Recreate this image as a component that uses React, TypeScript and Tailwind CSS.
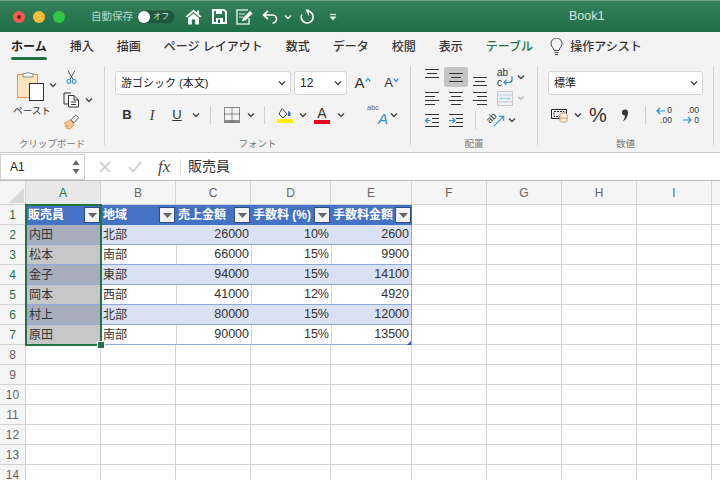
import type { ReactNode } from "react";

const jp = "font-['Liberation_Sans','Noto_Sans_CJK_JP',sans-serif]";

const tabs = ["ホーム", "挿入", "描画", "ページ レイアウト", "数式", "データ", "校閲", "表示"];

const columns = ["A", "B", "C", "D", "E", "F", "G", "H", "I", ""];

const rows = [
  ["内田", "北部", "26000", "10%", "2600"],
  ["松本", "南部", "66000", "15%", "9900"],
  ["金子", "東部", "94000", "15%", "14100"],
  ["岡本", "西部", "41000", "12%", "4920"],
  ["村上", "北部", "80000", "15%", "12000"],
  ["原田", "南部", "90000", "15%", "13500"],
];

const headers = ["販売員", "地域", "売上金額", "手数料 (%)", "手数料金額"];

function Chevron({ className = "", color = "#444" }: { className?: string; color?: string }) {
  return (
    <svg width="8" height="6" viewBox="0 0 8 6" className={`shrink-0 ${className}`}>
      <path d="M1 1.5 L4 4.5 L7 1.5" fill="none" stroke={color} strokeWidth="1.4" />
    </svg>
  );
}

function Slot({ w, children, className = "" }: { w: string; children: ReactNode; className?: string }) {
  return <div className={`flex items-center justify-center shrink-0 ${w} ${className}`}>{children}</div>;
}

type LineKind = "left" | "center" | "right" | "vert";

function Lines({ kind, top = 0 }: { kind: LineKind; top?: number }) {
  const d = {
    left: "M0 1.5H14M0 5.5H10M0 9.5H14M0 13.5H10",
    center: "M0 1.5H14M2 5.5H12M0 9.5H14M2 13.5H12",
    right: "M0 1.5H14M4 5.5H14M0 9.5H14M4 13.5H14",
    vert: "M0 3.5H14M2 7.5H12M0 11.5H14",
  }[kind];
  return (
    <svg width="14" height="15" viewBox="0 0 14 15" style={{ marginTop: top }}>
      <path d={d} stroke="#333" strokeWidth="1" fill="none" />
    </svg>
  );
}

function Group({ w, label, children }: { w: string; label: string; children: ReactNode }) {
  return (
    <div className={`${w} shrink-0 h-full flex flex-col`}>
      <div className="h-[76px]">{children}</div>
      <div className="text-center text-[9.5px] text-[#777] leading-[12px] mt-[2px]">{label}</div>
    </div>
  );
}

function Sep() {
  return <div className="w-px h-[79px] mt-[6px] bg-[#d2d2d2] shrink-0" />;
}

function SmallSep() {
  return <div className="w-px h-[18px] bg-[#d0d0d0] shrink-0" />;
}

function Select({ w, label, size = "text-[11px]" }: { w: string; label: string; size?: string }) {
  return (
    <div className={`${w} h-[24px] bg-white border border-[#d6d6d6] rounded-[3px] flex items-center justify-between pl-[5px] pr-[4px] shrink-0`}>
      <span className={`${size} text-[#222] whitespace-nowrap`}>{label}</span>
      <Chevron />
    </div>
  );
}

function TitleBar() {
  return (
    <div className="h-[32px] bg-gradient-to-b from-[#34805a] to-[#1f6f47] border-t border-[#6fa68a] flex items-center relative">
      <div className="w-[12px] h-[12px] rounded-full bg-[#f65c55] ml-[13px] flex items-center justify-center">
        <div className="w-[4px] h-[4px] rounded-full bg-[#7d1d18]" />
      </div>
      <div className="w-[12px] h-[12px] rounded-full bg-[#f9bb3c] ml-[8px]" />
      <div className="w-[12px] h-[12px] rounded-full bg-[#2fc640] ml-[8px]" />
      <span className="ml-[26px] text-[10.5px] text-[#b9d6c6] w-[46px] whitespace-nowrap">自動保存</span>
      <div className="w-[38px] h-[14px] rounded-full bg-[#1b5a3a] flex items-center border border-[#2a6b4a]">
        <div className="w-[12px] h-[12px] rounded-full bg-white" />
        <span className="text-[8px] text-[#cfe3d8] ml-[3px]">オフ</span>
      </div>
      <svg width="17" height="16" viewBox="0 0 17 16" className="ml-[10px]">
        <path d="M0.5 7.5 L8.5 0.5 L12 3.5 V1.5 H14 V5.3 L16.5 7.5 L15 8.5 L8.5 3 L2 8.5 Z" fill="#fff" />
        <path d="M3 9 L8.5 4.5 L14 9 V15.5 H10.2 V10.5 H6.8 V15.5 H3 Z" fill="#fff" />
      </svg>
      <svg width="15" height="15" viewBox="0 0 15 15" className="ml-[10px]">
        <path d="M1 1H12L14 3V14H1Z" fill="none" stroke="#fff" strokeWidth="2" />
        <path d="M4 1H10V5H4ZM4 9H11V14H4Z" fill="#fff" />
        <path d="M6 10.5H8V14H6Z" fill="#1f6f47" />
      </svg>
      <svg width="18" height="16" viewBox="0 0 18 16" className="ml-[9px]">
        <path d="M12 1H1V15H13V9" fill="none" stroke="#cfe3d8" strokeWidth="1.6" />
        <path d="M3 5H9M3 8H7" stroke="#cfe3d8" strokeWidth="1.2" />
        <path d="M6 12 L7 9 L14 2 L16.5 4.5 L9.5 11.5 Z" fill="#fff" />
      </svg>
      <svg width="16" height="14" viewBox="0 0 16 14" className="ml-[8px]">
        <path d="M6 1 L1.5 5 L6 9M2 5H10.5C13 5 14.5 7 14.5 9C14.5 11 13 13 10.5 13" fill="none" stroke="#fff" strokeWidth="1.7" />
      </svg>
      <Chevron className="ml-[6px]" color="#e4efe9" />
      <svg width="16" height="16" viewBox="0 0 16 16" className="ml-[7px]">
        <path d="M8.5 2 A6 6 0 1 1 2.7 5.5" fill="none" stroke="#fff" strokeWidth="1.7" />
        <path d="M6.5 0.5 L10 0.5 L10 7.5 Z" fill="#fff" />
      </svg>
      <svg width="8" height="8" viewBox="0 0 8 8" className="ml-[14px]">
        <path d="M1 1.5H7" stroke="#e4efe9" strokeWidth="1.2" />
        <path d="M0.5 3.5H7.5L4 7.5Z" fill="#e4efe9" />
      </svg>
      <span className="ml-[232px] text-[12.5px] text-[#d3e4da]">Book1</span>
    </div>
  );
}

function TabBar() {
  return (
    <div className="h-[28px] bg-[#f3f3f3] flex items-start pl-[11px] gap-[23px] text-[12px] text-[#333] pt-[6px]">
      {tabs.map((t, i) => (
        <div key={t} className="relative whitespace-nowrap leading-[18px]">
          <span className={i === 0 ? "font-bold text-[#222]" : "font-medium"}>{t}</span>
          {i === 0 && <div className="absolute left-0 right-0 top-[19px] h-[3px] rounded-full bg-[#217346]" />}
        </div>
      ))}
      <span className="text-[#217346] font-medium leading-[18px]">テーブル</span>
      <div className="flex items-center gap-[7px] -ml-[6px] leading-[18px]">
        <svg width="13" height="18" viewBox="0 0 13 18">
          <path d="M4 12.5C4 10 1 9 1 5.5A5.5 5.5 0 0 1 12 5.5C12 9 9 10 9 12.5ZM4.5 14.5H8.5M5 16.5H8" fill="none" stroke="#444" strokeWidth="1" />
        </svg>
        <span className="font-medium">操作アシスト</span>
      </div>
    </div>
  );
}

function Clipboard() {
  return (
    <div className="w-[104px] flex">
      <div className="ml-[14px] w-[38px] flex flex-col items-center pt-[10px]">
        <div className="flex items-start self-start ml-[1px]">
          <svg width="30" height="32" viewBox="0 0 30 32">
            <rect x="2.5" y="4.5" width="20" height="23" fill="#fbe3bd" stroke="#e9974a" strokeWidth="1" />
            <path d="M8 7V3.5H11A2.5 2.5 0 0 1 15 3.5H18V7Z" fill="#f5f5f5" stroke="#777" strokeWidth="0.8" />
            <rect x="14.5" y="13.5" width="14" height="17" fill="#fff" stroke="#333" strokeWidth="1" />
          </svg>
          <Chevron className="ml-[4px] mt-[12px]" />
        </div>
        <span className="text-[9.5px] text-[#333] whitespace-nowrap mt-[2px] -ml-[2px]">ペースト</span>
      </div>
      <div className="ml-[11px] flex flex-col pt-[10px]">
        <svg width="11" height="15" viewBox="0 0 12 17" className="ml-[3px]">
          <path d="M2 0.5 L8 11 M10 0.5 L4 11" stroke="#444" strokeWidth="1" />
          <circle cx="3" cy="13" r="2.2" fill="none" stroke="#2d8fd5" strokeWidth="1.2" />
          <circle cx="9" cy="13" r="2.2" fill="none" stroke="#2d8fd5" strokeWidth="1.2" />
        </svg>
        <div className="flex items-center mt-[6px]">
          <svg width="17" height="17" viewBox="0 0 17 17">
            <path d="M8 2H1V13H5" fill="none" stroke="#333" strokeWidth="1" />
            <path d="M5.5 4.5H11L15.5 9V16H5.5Z M11 4.5V9H15.5M8 11H13M8 13.5H13" fill="#fff" stroke="#333" strokeWidth="1" />
          </svg>
          <Chevron className="ml-[5px]" />
        </div>
        <svg width="17" height="16" viewBox="0 0 17 17" className="mt-[6px]">
          <path d="M1 10 L7 6 L11 11 L7 16 L3 15 L5 13 L1.5 13 L3.5 11.5 Z" fill="#fbc999" stroke="#ea8a3c" strokeWidth="1" />
          <path d="M8 6 L13 1 L16 4 L11 9.5 Z" fill="#f4f4f4" stroke="#555" strokeWidth="1" />
        </svg>
      </div>
    </div>
  );
}

function FontTools() {
  return (
    <div className="pt-[11px] pl-[10px]">
      <div className="flex items-center">
        <Select w="w-[176px]" label="游ゴシック (本文)" />
        <div className="w-[3px]" />
        <Select w="w-[53px]" label="12" size="text-[12px]" />
        <Slot w="w-[34px]" className="ml-[-1px]">
          <span className="text-[15px] text-[#333]">A</span>
          <Chevron className="mb-[6px] scale-y-[-1] scale-x-75 -ml-[1px]" color="#2d8fd5" />
        </Slot>
        <Slot w="w-[24px]">
          <span className="text-[13px] text-[#333]">A</span>
          <Chevron className="mb-[6px] scale-x-75 -ml-[1px]" color="#2d8fd5" />
        </Slot>
      </div>
      <div className="flex items-center mt-[7px] h-[26px] text-[#333]">
        <Slot w="w-[24px]"><span className="text-[13px] font-bold">B</span></Slot>
        <Slot w="w-[26px]"><span className="text-[14px] italic font-['Liberation_Serif',serif]">I</span></Slot>
        <Slot w="w-[24px]"><span className="text-[13px] underline">U</span></Slot>
        <Slot w="w-[14px]"><Chevron /></Slot>
        <Slot w="w-[14px]"><SmallSep /></Slot>
        <Slot w="w-[25px]" className="ml-[2px]">
          <svg width="16" height="16" viewBox="0 0 16 16">
            <path d="M0.5 0.5H15.5V13.5H0.5Z M8 0.5V13.5 M0.5 7H15.5" fill="none" stroke="#222" strokeWidth="1" strokeDasharray="1 1" />
            <path d="M0 15H16" stroke="#111" strokeWidth="1" />
          </svg>
        </Slot>
        <Slot w="w-[14px]"><Chevron /></Slot>
        <Slot w="w-[12px]"><SmallSep /></Slot>
        <Slot w="w-[26px]" className="ml-[2px]">
          <svg width="16" height="16" viewBox="0 0 16 16">
            <path d="M5 1.5 L10 7 L6 11 L2 7 Z" fill="#fff" stroke="#444" strokeWidth="1" />
            <path d="M11 4 A3 3 0 0 1 13 9 H11 Z" fill="#2d6fc0" />
            <rect x="0" y="12" width="16" height="4" fill="#fff200" />
          </svg>
        </Slot>
        <Slot w="w-[10px]"><Chevron /></Slot>
        <Slot w="w-[28px]">
          <div className="flex flex-col items-center">
            <span className="text-[14px] leading-[13px] text-[#333]">A</span>
            <div className="w-[16px] h-[4px] bg-[#f5001c]" />
          </div>
        </Slot>
        <Slot w="w-[10px]"><Chevron /></Slot>
        <div className="relative w-[22px] h-[24px] ml-[21px] shrink-0">
          <span className="absolute left-0 top-[1px] text-[7.5px] text-[#666] leading-[8px]">abc</span>
          <span className="absolute right-[1px] top-[8px] text-[15px] italic text-[#2d8fd5] leading-[16px]">A</span>
        </div>
        <Slot w="w-[10px]"><Chevron /></Slot>
      </div>
    </div>
  );
}

function AlignCell({ kind, active, top }: { kind: LineKind; active?: boolean; top?: number }) {
  return (
    <div className={`w-[24px] h-[20px] flex items-center justify-center rounded-[3px] ${active ? "bg-[#c4c4c4]" : ""}`}>
      <Lines kind={kind} top={top} />
    </div>
  );
}

function IndentIcon({ flip }: { flip?: boolean }) {
  return (
    <svg width="14" height="13" viewBox="0 0 14 13">
      <path d="M0 0.5H14M7 4.5H14M7 8.5H14M0 12.5H14" stroke="#333" strokeWidth="1" />
      <path d={flip ? "M0 6.5H5.5M3.5 4L6 6.5L3.5 9" : "M5.5 6.5H0.5M3 4L0.5 6.5L3 9"} stroke="#2d8fd5" strokeWidth="1.2" fill="none" />
    </svg>
  );
}

function AlignTools() {
  return (
    <div className="pt-[7px] pl-[9px]">
      <div className="flex items-center h-[20px]">
        <AlignCell kind="vert" top={-8} />
        <AlignCell kind="vert" active />
        <AlignCell kind="vert" top={8} />
        <div className="relative w-[24px] h-[20px] shrink-0">
          <span className="absolute left-[5px] top-[1px] text-[10px] leading-[9px] text-[#333]">ab</span>
          <span className="absolute left-[5px] top-[12px] text-[10px] leading-[8px] text-[#333]">c</span>
          <svg width="12" height="10" viewBox="0 0 12 10" className="absolute left-[11px] top-[9px]">
            <path d="M9 0V3.5C9 6 8 6.5 6 6.5H1M3.5 4L1 6.5L3.5 9" fill="none" stroke="#2d8fd5" strokeWidth="1.2" />
          </svg>
        </div>
        <Chevron className="ml-[1px]" />
      </div>
      <div className="flex items-center h-[20px] mt-[1px]">
        <AlignCell kind="left" />
        <AlignCell kind="center" />
        <AlignCell kind="right" />
        <Slot w="w-[24px]" className="pl-[2px]">
          <svg width="16" height="15" viewBox="0 0 16 15">
            <path d="M0.5 0.5H15.5V14.5H0.5ZM0.5 4H15.5M0.5 11H15.5" fill="#eef3f8" stroke="#c4c8cc" strokeWidth="1" />
            <path d="M3 7.5H13M5 5.5L3 7.5L5 9.5M11 5.5L13 7.5L11 9.5" fill="none" stroke="#a5d0ee" strokeWidth="1" />
          </svg>
        </Slot>
        <Chevron className="ml-[1px]" color="#bbb" />
      </div>
      <div className="flex items-center h-[20px] mt-[2px]">
        <Slot w="w-[24px]"><IndentIcon /></Slot>
        <Slot w="w-[24px]"><IndentIcon flip /></Slot>
        <div className="w-[7px] shrink-0" />
        <Slot w="w-[1px]"><SmallSep /></Slot>
        <Slot w="w-[32px]" className="pl-[6px]">
          <div className="relative w-[18px] h-[16px]">
            <span className="absolute left-0 top-[1px] text-[9.5px] leading-[10px] text-[#333] -rotate-45">ab</span>
            <svg width="12" height="12" viewBox="0 0 14 14" className="absolute right-[-1px] top-[3px]">
              <path d="M1 13L12 2M7 1.5H12.5V7" fill="none" stroke="#2d8fd5" strokeWidth="1.2" />
            </svg>
          </div>
        </Slot>
        <Chevron />
      </div>
    </div>
  );
}

function NumberTools() {
  return (
    <div className="pt-[11px] pl-[10px]">
      <Select w="w-[155px]" label="標準" />
      <div className="flex items-center h-[26px] mt-[7px]">
        <Slot w="w-[24px]">
          <svg width="18" height="15" viewBox="0 0 18 15">
            <path d="M0.5 1.5H15.5V10.5H0.5Z" fill="none" stroke="#222" strokeWidth="1" />
            <path d="M3 3.5H13V8.5H3Z" fill="none" stroke="#222" strokeWidth="1" strokeDasharray="2 1" />
            <ellipse cx="12.5" cy="6.5" rx="3.5" ry="1.5" fill="#fff" stroke="#ea8a3c" />
            <path d="M9 6.5V13C9 14.5 16 14.5 16 13V6.5M9 10H16" fill="#fff" stroke="#ea8a3c" />
          </svg>
        </Slot>
        <Slot w="w-[12px]"><Chevron /></Slot>
        <Slot w="w-[28px]"><span className="text-[20px] text-[#333] leading-[20px]">%</span></Slot>
        <Slot w="w-[26px]">
          <svg width="8" height="13" viewBox="0 0 8 13">
            <path d="M1 3.5A3 3 0 0 1 7 3.5C7 7 5 10.5 2 12.5C3 10 4 8.5 4 6.5A3 3 0 0 1 1 3.5Z" fill="#333" />
          </svg>
        </Slot>
        <Slot w="w-[14px]"><SmallSep /></Slot>
        <div className="relative w-[16px] h-[18px] ml-[4px] text-[8.5px] leading-[9px] text-[#333] shrink-0">
          <span className="absolute right-0 top-0">0</span>
          <span className="absolute right-0 top-[10px]">.00</span>
          <svg width="9" height="8" viewBox="0 0 9 8" className="absolute left-0 top-[1px]">
            <path d="M9 4H1M4 1L1 4L4 7" fill="none" stroke="#2d8fd5" strokeWidth="1.2" />
          </svg>
        </div>
        <div className="relative w-[16px] h-[18px] ml-[11px] text-[8.5px] leading-[9px] text-[#333] shrink-0">
          <span className="absolute right-0 top-0">.00</span>
          <span className="absolute right-0 top-[10px]">0</span>
          <svg width="9" height="8" viewBox="0 0 9 8" className="absolute left-0 top-[10px]">
            <path d="M0 4H8M5 1L8 4L5 7" fill="none" stroke="#2d8fd5" strokeWidth="1.2" />
          </svg>
        </div>
      </div>
    </div>
  );
}

function Ribbon() {
  return (
    <div className="h-[93px] bg-[#f3f3f3] flex border-b border-[#c8c8c8]">
      <Group w="w-[104px]" label="クリップボード"><Clipboard /></Group>
      <Sep />
      <Group w="w-[305px]" label="フォント"><FontTools /></Group>
      <Sep />
      <Group w="w-[126px]" label="配置"><AlignTools /></Group>
      <Sep />
      <Group w="w-[175px]" label="数値"><NumberTools /></Group>
      <Sep />
    </div>
  );
}

function FormulaBar() {
  return (
    <div className="h-[28px] bg-white flex items-center border-b border-[#bdbdbd]">
      <div className="w-[85px] h-[26px] border border-[#d0d0d0] flex items-center justify-between pl-[9px] pr-[4px] shrink-0">
        <span className="text-[12px] text-[#222]">A1</span>
        <svg width="8" height="16" viewBox="0 0 8 16">
          <path d="M4 1L7.5 6H0.5ZM4 15L7.5 10H0.5Z" fill="#666" />
        </svg>
      </div>
      <svg width="12" height="12" viewBox="0 0 12 12" className="ml-[14px]">
        <path d="M1 1L11 11M11 1L1 11" stroke="#c8c8c8" strokeWidth="1.6" />
      </svg>
      <svg width="14" height="12" viewBox="0 0 14 12" className="ml-[17px]">
        <path d="M1 6L5 10.5L13 1" fill="none" stroke="#c8c8c8" strokeWidth="1.6" />
      </svg>
      <span className="ml-[16px] w-[16px] italic text-[17px] text-[#444] font-['Liberation_Serif',serif]">fx</span>
      <div className="w-px h-[16px] bg-[#dcdcdc] ml-[6px]" />
      <span className="ml-[7px] text-[14px] text-[#333]">販売員</span>
    </div>
  );
}

function FilterButton() {
  return (
    <div className="w-[16px] h-[16px] bg-[#f2f2f2] border border-[#2f4d80] flex items-center justify-center shrink-0">
      <svg width="9" height="5" viewBox="0 0 9 5">
        <path d="M0 0H9L4.5 5Z" fill="#666" />
      </svg>
    </div>
  );
}

function RowHead({ n, on }: { n: number; on?: boolean }) {
  return (
    <div className={`border-r border-b border-[#d4d4d4] flex items-center justify-center text-[12px] bg-[#f5f5f5] ${on ? "text-[#217346]" : "text-[#666]"}`}>
      {n}
    </div>
  );
}

function Row({ r, ri }: { r: string[]; ri: number }) {
  const band = ri % 2 === 0;
  return (
    <>
      <RowHead n={ri + 2} on />
      <div className={`flex items-center pl-[3px] text-[12px] border-b border-[#8ea9db] ${band ? "bg-[#a7adbb]" : "bg-[#c6c6c6]"}`}>{r[0]}</div>
      <div className={`flex items-center pl-[2px] text-[12px] border-b border-[#8ea9db] ${band ? "bg-[#d9e1f2]" : "bg-white"}`}>{r[1]}</div>
      {r.slice(2).map((v, i) => (
        <div
          key={i}
          className={`flex items-center justify-end pr-[2px] border-b border-[#8ea9db] ${band ? "bg-[#d9e1f2]" : "bg-white border-l border-l-[#d4d4d4]"} ${i === 2 ? "border-r border-r-[#8ea9db]" : ""}`}
        >
          {v}
        </div>
      ))}
      {Array.from({ length: 5 }).map((_, i) => (
        <div key={i} className="border-r border-b border-[#d4d4d4]" />
      ))}
    </>
  );
}

function BlankRow({ n }: { n: number }) {
  return (
    <>
      <RowHead n={n} />
      {columns.map((c, i) => (
        <div key={i + c} className="border-r border-b border-[#d4d4d4]" />
      ))}
    </>
  );
}

function Sheet() {
  const line = "border-r border-b border-[#d4d4d4]";
  return (
    <div className="relative grid grid-cols-[26px_75px_75px_75px_80px_81px_75px_75px_75px_75px_75px] grid-rows-[24px] auto-rows-[20px] bg-white text-[12.5px] text-[#333]">
      <div className="bg-[#f5f5f5] border-r border-b border-[#d4d4d4] flex items-end justify-end">
        <div className="w-0 h-0 border-l-[15px] border-l-transparent border-b-[15px] border-b-[#d8d8d8] mr-[1px] mb-[1px]" />
      </div>
      {columns.map((c, i) => (
        <div
          key={i + c}
          className={`border-r border-b border-[#d4d4d4] flex items-center justify-center text-[12px] ${i === 0 ? "bg-[#e8e8e8] text-[#217346]" : "bg-[#f5f5f5] text-[#666]"}`}
        >
          {c}
        </div>
      ))}

      <RowHead n={1} on />
      {headers.map((h) => (
        <div key={h} className="bg-[#4472c4] text-white font-bold text-[12px] flex items-center justify-between pl-[2px] pr-[1px] whitespace-nowrap overflow-hidden">
          <span>{h}</span>
          <FilterButton />
        </div>
      ))}
      {Array.from({ length: 5 }).map((_, i) => <div key={i} className={line} />)}

      {rows.map((r, ri) => (
        <Row key={r[0]} r={r} ri={ri} />
      ))}

      {Array.from({ length: 7 }).map((_, i) => (
        <BlankRow key={i} n={i + 8} />
      ))}

      <div className="absolute left-[25px] top-[23px] w-[77px] h-[142px] border-2 border-[#217346] pointer-events-none" />
      <div className="absolute left-[97px] top-[160px] w-[6px] h-[6px] bg-[#217346] border border-white box-content" />
      <div className="absolute left-[407px] top-[160px] w-0 h-0 border-l-[4px] border-l-transparent border-b-[4px] border-b-[#2f4fbf]" />
    </div>
  );
}

export default function App() {
  return (
    <div className={`w-[720px] h-[480px] overflow-hidden bg-white ${jp}`}>
      <TitleBar />
      <TabBar />
      <Ribbon />
      <FormulaBar />
      <Sheet />
    </div>
  );
}
